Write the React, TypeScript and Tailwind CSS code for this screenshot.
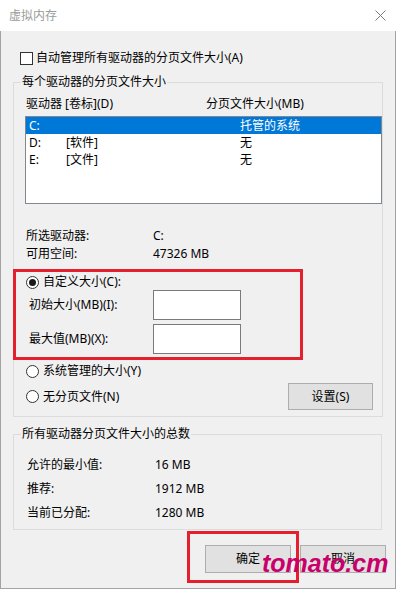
import type { ReactNode } from "react";

function Radio({ checked }: { checked?: boolean }) {
  return (
    <span className="flex h-[13px] w-[13px] shrink-0 items-center justify-center rounded-full border border-[#333333] bg-white">
      {checked ? <span className="h-[7px] w-[7px] rounded-full bg-[#1a1a1a]" /> : null}
    </span>
  );
}

function WinButton({ children, className }: { children: ReactNode; className: string }) {
  return (
    <button
      type="button"
      className={`flex items-center justify-center border border-[#adadad] bg-[#e1e1e1] text-[12px] leading-[16px] text-black ${className}`}
    >
      {children}
    </button>
  );
}

const drives = [
  { letter: "C:", label: "", size: "托管的系统", selected: true },
  { letter: "D:", label: "[软件]", size: "无", selected: false },
  { letter: "E:", label: "[文件]", size: "无", selected: false },
];

const totals = [
  { label: "允许的最小值:", value: "16 MB" },
  { label: "推荐:", value: "1912 MB" },
  { label: "当前已分配:", value: "1280 MB" },
];

export default function App() {
  return (
    <div className="relative flex h-[589px] w-[396px] flex-col bg-white font-['Noto_Sans','Noto_Sans_CJK_SC',sans-serif] text-[12px] leading-[16px] text-black">
      {/* title bar */}
      <div className="flex h-[31px] shrink-0 items-center justify-between bg-white pl-[9px] pr-[10px]">
        <span className="text-[12px] leading-[16px] text-[#9a9a9a]">虚拟内存</span>
        <svg width="11" height="11" viewBox="0 0 11 11" className="text-[#7a7a7a]">
          <path d="M0.5 0.5 L10.5 10.5 M10.5 0.5 L0.5 10.5" stroke="currentColor" strokeWidth="1" fill="none" />
        </svg>
      </div>

      <div className="flex flex-1 flex-col border-x border-b border-[#a3a3a3] bg-[#f0f0f0]">
        <div className="ml-[19px] mt-[19px] flex h-[16px] items-center gap-[3px]">
          <span className="h-[13px] w-[13px] border border-[#333333] bg-white" />
          <span>自动管理所有驱动器的分页文件大小(A)</span>
        </div>

        <fieldset className="ml-[12px] mt-[8px] w-[369px] border border-[#dcdcdc] pb-[6px]">
          <legend className="ml-[7px] px-[1px] leading-[16px]">每个驱动器的分页文件大小</legend>

          <div className="mt-[6px] flex h-[16px] items-center pl-[12px]">
            <span className="w-[180px]">驱动器 [卷标](D)</span>
            <span>分页文件大小(MB)</span>
          </div>

          <div className="ml-[11px] mt-[4px] h-[88px] w-[357px] border border-[#828790] bg-white">
            {drives.map((d) => (
              <div
                key={d.letter}
                className={`flex h-[17px] items-center pl-[3px] ${d.selected ? "bg-[#0078d7] text-white" : "text-black"}`}
              >
                <span className="w-[37px]">{d.letter}</span>
                <span className="w-[174px]">{d.label}</span>
                <span>{d.size}</span>
              </div>
            ))}
          </div>

          <div className="mt-[24px] flex h-[16px] items-center pl-[12px]">
            <span className="w-[127px]">所选驱动器:</span>
            <span>C:</span>
          </div>
          <div className="mt-[2px] flex h-[16px] items-center pl-[12px]">
            <span className="w-[127px]">可用空间:</span>
            <span>47326 MB</span>
          </div>

          <div className="-ml-[1px] mt-[7px] w-[290px] border-[3px] border-[#e5202e] pb-[3px] pt-[2px]">
            <div className="flex h-[16px] items-center gap-[4px] pl-[10px]">
              <Radio checked />
              <span>自定义大小(C):</span>
            </div>
            <div className="flex h-[30px] items-center pl-[13px]">
              <span className="w-[124px]">初始大小(MB)(I):</span>
              <span className="h-[30px] w-[88px] border border-[#7a7a7a] bg-white" />
            </div>
            <div className="mt-[4px] flex h-[30px] items-center pl-[13px]">
              <span className="w-[124px]">最大值(MB)(X):</span>
              <span className="h-[30px] w-[88px] border border-[#7a7a7a] bg-white" />
            </div>
          </div>

          <div className="mt-[3px] flex h-[16px] items-center gap-[4px] pl-[12px]">
            <Radio />
            <span>系统管理的大小(Y)</span>
          </div>
          <div className="mt-[4px] flex h-[27px] items-center justify-between pl-[12px] pr-[9px]">
            <div className="flex items-center gap-[4px]">
              <Radio />
              <span>无分页文件(N)</span>
            </div>
            <WinButton className="h-[27px] w-[85px]">设置(S)</WinButton>
          </div>
        </fieldset>

        <fieldset className="ml-[12px] mt-[9px] w-[369px] border border-[#dcdcdc] pb-[4px]">
          <legend className="ml-[7px] px-[1px] leading-[16px]">所有驱动器分页文件大小的总数</legend>
          <div className="mt-[11px] flex flex-col">
            {totals.map((t) => (
              <div key={t.label} className="flex h-[24px] items-center pl-[13px]">
                <span className="w-[128px]">{t.label}</span>
                <span>{t.value}</span>
              </div>
            ))}
          </div>
        </fieldset>

        <div className="mt-[15px] flex justify-end gap-[9px] pr-[9px]">
          <WinButton className="h-[28px] w-[86px]">确定</WinButton>
          <WinButton className="h-[28px] w-[86px]">取消</WinButton>
        </div>
      </div>

      {/* annotation overlay */}
      <div className="absolute left-[187px] top-[531px] h-[52px] w-[112px] border-[3px] border-[#e5202e]" />
      <span className="absolute left-[262px] top-[551px] font-['Liberation_Sans',sans-serif] text-[25px] font-bold italic leading-[25px] text-[#c9006b]">
        tomato.cm
      </span>
    </div>
  );
}
